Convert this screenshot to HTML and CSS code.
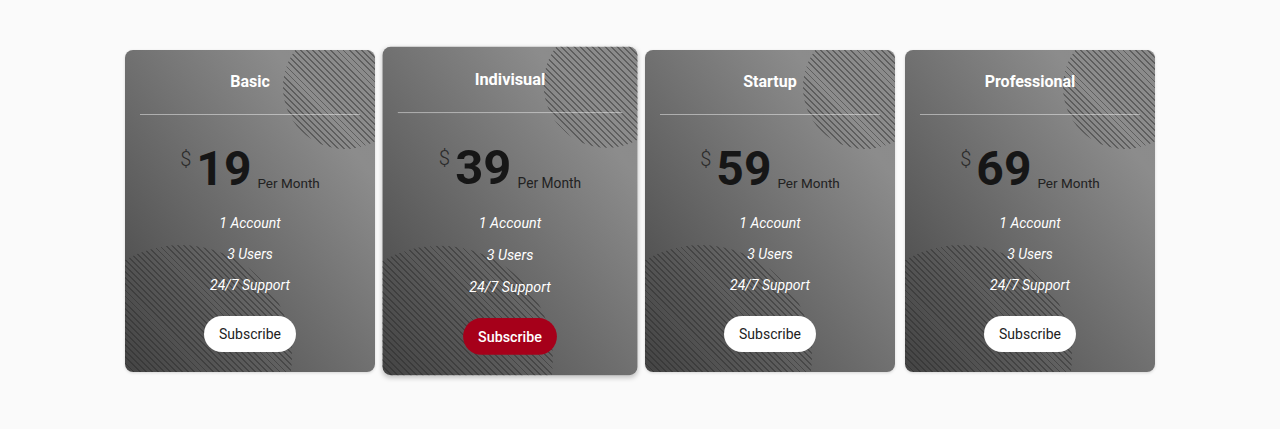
FILE: index.html
```html
<!DOCTYPE html>
<html lang="en">
<head>
<meta charset="utf-8">
<title>Pricing</title>
<link rel="stylesheet" href="styles.css">
</head>
<body>
<main class="pricing">
  <section class="card">
    <h3 class="title">Basic</h3>
    <div class="divider"></div>
    <div class="price"><span class="cur">$</span><span class="amount">19</span><span class="per">Per Month</span></div>
    <ul class="features"><li>1 Account</li><li>3 Users</li><li>24/7 Support</li></ul>
    <button class="btn">Subscribe</button>
  </section>
  <section class="card featured">
    <h3 class="title">Indivisual</h3>
    <div class="divider"></div>
    <div class="price"><span class="cur">$</span><span class="amount">39</span><span class="per">Per Month</span></div>
    <ul class="features"><li>1 Account</li><li>3 Users</li><li>24/7 Support</li></ul>
    <button class="btn btn-red">Subscribe</button>
  </section>
  <section class="card">
    <h3 class="title">Startup</h3>
    <div class="divider"></div>
    <div class="price"><span class="cur">$</span><span class="amount">59</span><span class="per">Per Month</span></div>
    <ul class="features"><li>1 Account</li><li>3 Users</li><li>24/7 Support</li></ul>
    <button class="btn">Subscribe</button>
  </section>
  <section class="card">
    <h3 class="title">Professional</h3>
    <div class="divider"></div>
    <div class="price"><span class="cur">$</span><span class="amount">69</span><span class="per">Per Month</span></div>
    <ul class="features"><li>1 Account</li><li>3 Users</li><li>24/7 Support</li></ul>
    <button class="btn">Subscribe</button>
  </section>
</main>
</body>
</html>
```

FILE: styles.css
```css
* { box-sizing: border-box; }
html, body { margin: 0; padding: 0; }
body {
  background: #fafafa;
  font-family: Roboto, "Liberation Sans", Arial, sans-serif;
  width: 1280px;
  height: 429px;
  overflow: hidden;
}
.pricing {
  display: flex;
  justify-content: center;
  gap: 10px;
  padding-top: 50px;
}
.card {
  position: relative;
  overflow: hidden;
  width: 250px;
  height: 322px;
  border-radius: 8px;
  padding: 20px 15px 20px;
  display: flex;
  flex-direction: column;
  align-items: center;
  background: linear-gradient(to top right, #444 0%, #6c6c6c 45%, #8c8c8c 80%, #8a8a8a 100%);
  box-shadow: 0 1px 3px rgba(0,0,0,0.15);
}
.card::before,
.card::after {
  content: "";
  position: absolute;
  border-radius: 50%;
  background: repeating-linear-gradient(45deg, rgba(40,40,40,0.45) 0 1.3px, transparent 1.3px 4.3px);
  pointer-events: none;
}
.card::before {
  left: 158px;
  top: -25px;
  width: 124px;
  height: 124px;
}
.card::after {
  left: -55px;
  top: 195px;
  width: 222px;
  height: 222px;
}
.card > * { position: relative; z-index: 1; }
.featured {
  transform: scale(1.02);
  box-shadow: 0 2px 5px rgba(0,0,0,0.22);
}
.title {
  margin: 0;
  font-size: 16px;
  line-height: 24px;
  font-weight: 700;
  color: #fff;
}
.divider {
  align-self: stretch;
  height: 1px;
  margin-top: 20px;
  background: rgba(255,255,255,0.45);
}
.price {
  display: flex;
  align-items: flex-start;
  margin-top: 26px;
  height: 56px;
}
.cur {
  font-size: 20px;
  line-height: 20px;
  font-weight: 300;
  color: #2a2a2a;
  margin-top: 8px;
  margin-right: 5px;
}
.amount {
  font-size: 48px;
  line-height: 56px;
  font-weight: 700;
  color: #161616;
}
.per {
  font-size: 13.5px;
  line-height: 16px;
  color: #222;
  margin-top: 34px;
  margin-left: 6px;
}
.features {
  list-style: none;
  margin: 11px 0 0;
  padding: 0;
  text-align: center;
  font-size: 14px;
  line-height: 31px;
  font-style: italic;
  font-weight: 400;
  color: #fff;
}
.btn {
  margin-top: 15px;
  height: 36px;
  width: 92px;
  border: none;
  border-radius: 18px;
  background: #fff;
  color: #222;
  font-family: inherit;
  font-size: 14px;
  padding: 0;
}
.btn-red {
  background: #a6001a;
  color: #fff;
  font-weight: 500;
}
```
